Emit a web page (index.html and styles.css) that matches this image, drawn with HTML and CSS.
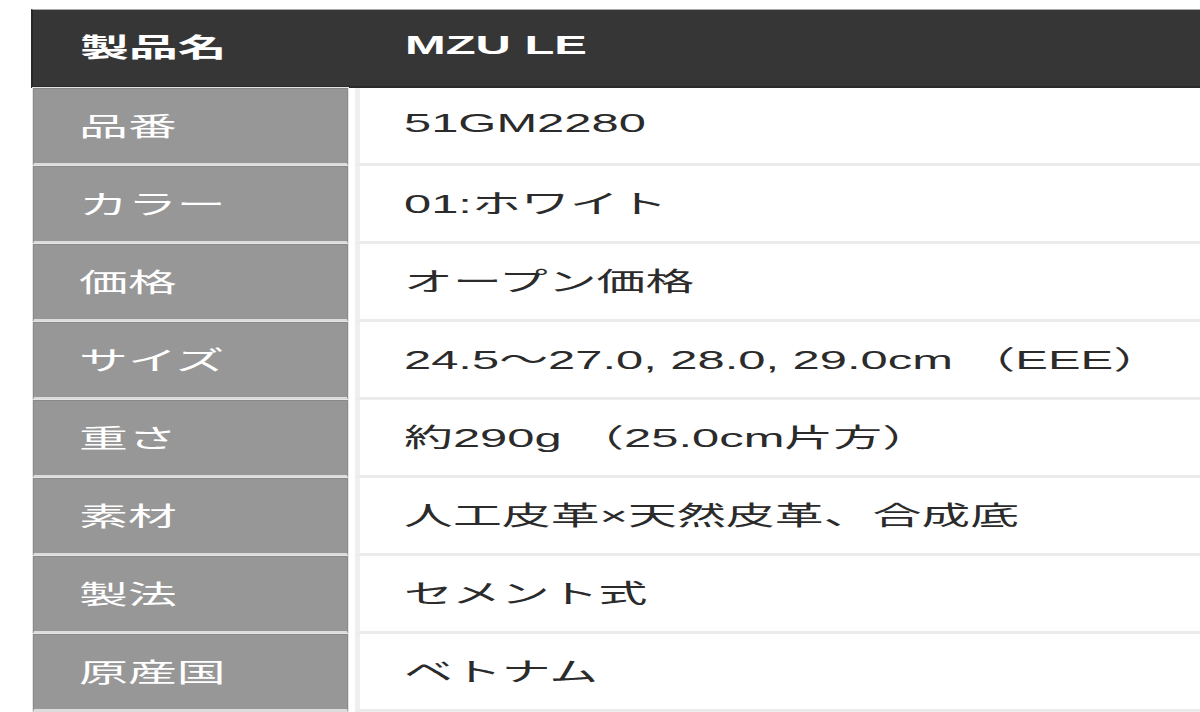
FILE: index.html
```html
<!DOCTYPE html>
<html lang="ja">
<head>
<meta charset="utf-8">
<title>製品仕様</title>
<link rel="stylesheet" href="styles.css">
</head>
<body>
<div class="spec">
  <div class="head">
    <div class="hcell hlabel"><span class="t">製品名</span></div>
    <div class="hcell hvalue"><span class="t">MZU LE</span></div>
  </div>
  <div class="row"><div class="label"><span class="t">品番</span></div><div class="value"><span class="t">51GM2280</span></div></div>
  <div class="row"><div class="label"><span class="t">カラー</span></div><div class="value"><span class="t">01:ホワイト</span></div></div>
  <div class="row"><div class="label"><span class="t">価格</span></div><div class="value"><span class="t">オープン価格</span></div></div>
  <div class="row"><div class="label"><span class="t">サイズ</span></div><div class="value"><span class="t">24.5～27.0, 28.0, 29.0cm （EEE）</span></div></div>
  <div class="row"><div class="label"><span class="t">重さ</span></div><div class="value"><span class="t">約290g （25.0cm片方）</span></div></div>
  <div class="row"><div class="label"><span class="t">素材</span></div><div class="value"><span class="t">人工皮革×天然皮革、合成底</span></div></div>
  <div class="row"><div class="label"><span class="t">製法</span></div><div class="value"><span class="t">セメント式</span></div></div>
  <div class="row"><div class="label"><span class="t">原産国</span></div><div class="value"><span class="t">ベトナム</span></div></div>
</div>
</body>
</html>
```
FILE: styles.css
```css
html, body {
  margin: 0;
  padding: 0;
  background: #ffffff;
  overflow: hidden;
}
body {
  font-family: "Liberation Sans", "Noto Sans CJK JP", sans-serif;
  font-size: 26px;
  width: 1200px;
  height: 712px;
}
.spec {
  margin: 9px 0 0 31px;
  width: 1200px;
}
.t {
  display: inline-block;
  transform: scaleX(1.88);
  transform-origin: left center;
  white-space: nowrap;
}
.head {
  display: flex;
  height: 76px;
  background: #363636;
  border-top: 1px solid #a9a9a9;
  border-left: 2px solid #262626;
  border-bottom: 2px solid #2a2a2a;
  color: #ffffff;
  font-weight: bold;
}
.hcell {
  display: flex;
  align-items: center;
  padding-bottom: 6px;
  box-sizing: border-box;
}
.hlabel {
  width: 324px;
  padding-left: 47px;
}
.hvalue {
  flex: 1;
  padding-left: 48px;
}
.row {
  display: flex;
  height: 78px;
}
.label {
  width: 315px;
  margin-left: 2px;
  box-sizing: border-box;
  background: #979797;
  border: 1px solid #8a8a8a;
  border-bottom: 3px solid #dcdcdc;
  outline: 1px solid #e4e4e4;
  color: #ffffff;
  display: flex;
  align-items: center;
  padding-left: 45px;
  padding-bottom: 4px;
}
.value {
  flex: 1;
  margin-left: 7px;
  box-sizing: border-box;
  border-left: 5px solid #efefef;
  border-bottom: 3px solid #ebebeb;
  color: #2b2b2b;
  display: flex;
  align-items: center;
  padding-left: 44px;
  padding-bottom: 4px;
}
```
